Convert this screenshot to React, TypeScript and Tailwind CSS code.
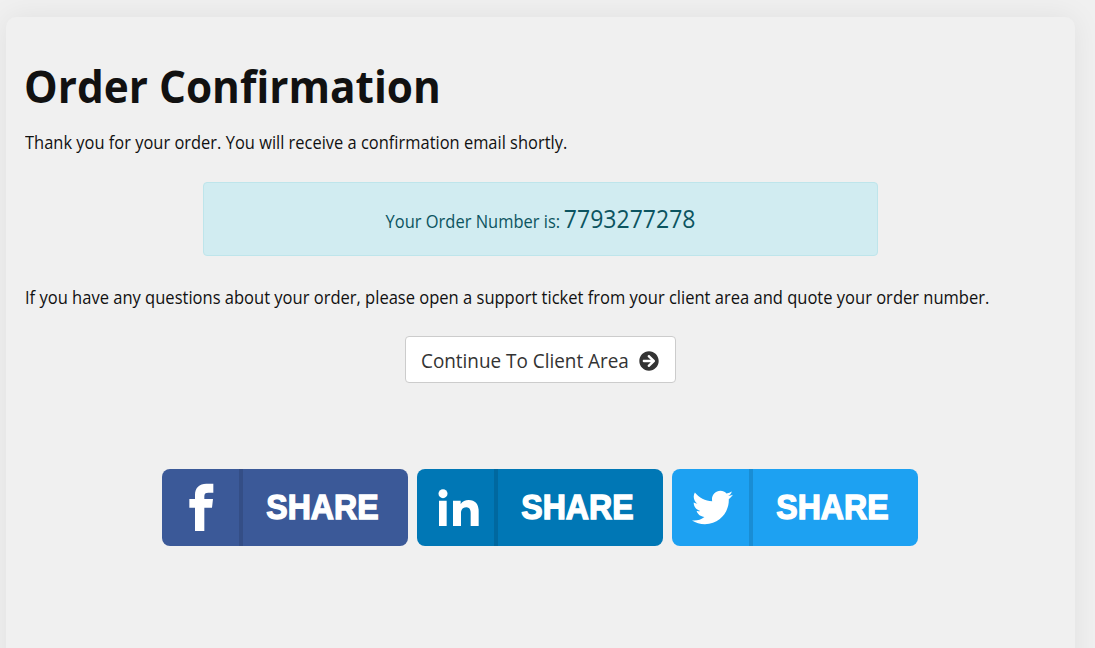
import React from "react";
import { FaArrowCircleRight, FaTwitter } from "react-icons/fa";

function FacebookMark() {
  return (
    <svg viewBox="0 0 231 231" className="h-[77px] w-[77px]" fill="currentColor">
      <path d="M99 186V116H82V90H99V78C99 56 112 44 133 44H154V71H139C130 71 127 74 127 82V90H153L150 116H127V186Z" />
    </svg>
  );
}

function LinkedInMark() {
  return (
    <svg viewBox="0 0 231 231" className="h-[77px] w-[77px]" fill="currentColor">
      <circle cx="78" cy="74" r="13.5" />
      <path d="M66 95H89V171H66ZM108 95H131V105C136 97 145 93 155 93C176 93 185 107 185 126V171H161V132C161 121 157 115 148 115C138 115 132 121 132 132V171H108Z" />
    </svg>
  );
}

function Share({ color, divider, children }: { color: string; divider: string; children: React.ReactNode }) {
  return (
    <a className={`flex h-[77px] w-[246.5px] overflow-hidden rounded-lg text-white ${color}`}>
      <span className="flex w-[77px] items-center justify-center">{children}</span>
      <span className={`w-[4px] ${divider}`} />
      <span className="flex flex-1 items-center justify-center pr-[6px] font-['Liberation_Sans',sans-serif] text-[34.5px] font-bold">
        <span className="inline-block scale-x-[0.93] [-webkit-text-stroke:1.4px_white]">SHARE</span>
      </span>
    </a>
  );
}

export default function App() {
  return (
    <div className="h-[648px] overflow-hidden bg-[#f0f0f0] pl-[6px] pt-[17px] font-['Open_Sans','Noto_Sans',sans-serif] text-[#111]">
      <main className="h-[700px] w-[1069px] rounded-[10px] bg-[#f0f0f0] px-[18px] pt-[40px] shadow-[0_0_30px_rgba(0,0,0,0.07)]">
        <h1 className="w-max origin-left scale-x-[0.962] whitespace-nowrap text-[44px] font-bold leading-[58px]">Order Confirmation</h1>
        <p className="ml-px mt-[15px] w-max origin-left scale-x-[0.935] whitespace-nowrap text-[17.6px] leading-6">Thank you for your order. You will receive a confirmation email shortly.</p>
        <div className="mx-auto mt-[28px] flex h-[74px] w-[675px] items-center justify-center rounded border border-[#bee5eb] bg-[#d1ecf1] text-[17.6px] text-[#0c5460]">
          <div className="flex scale-x-[0.936] items-baseline gap-[4px] whitespace-nowrap">
            <span>Your Order Number is:</span>
            <span className="text-[24.6px]">7793277278</span>
          </div>
        </div>
        <p className="ml-px mt-[29px] w-max origin-left scale-x-[0.939] whitespace-nowrap text-[17.6px] leading-6">If you have any questions about your order, please open a support ticket from your client area and quote your order number.</p>
        <button className="mx-auto mt-[27px] flex h-[47px] w-[271px] items-center rounded border border-[#ccc] bg-white pl-[15px] text-[20px] text-[#333]">
          <span className="w-[218px] text-left">
            <span className="inline-block origin-left translate-y-px scale-x-[0.945] whitespace-nowrap">Continue To Client Area</span>
          </span>
          <FaArrowCircleRight className="h-5 w-5 shrink-0 translate-y-px" />
        </button>
        <div className="mt-[86px] flex justify-center gap-[8.5px] pr-px">
          <Share color="bg-[#3b5998]" divider="bg-[#344e86]"><FacebookMark /></Share>
          <Share color="bg-[#0077b5]" divider="bg-[#00689f]"><LinkedInMark /></Share>
          <Share color="bg-[#1da1f2]" divider="bg-[#198dd4]"><FaTwitter className="ml-[5px] h-[41px] w-[41px]" /></Share>
        </div>
      </main>
    </div>
  );
}
